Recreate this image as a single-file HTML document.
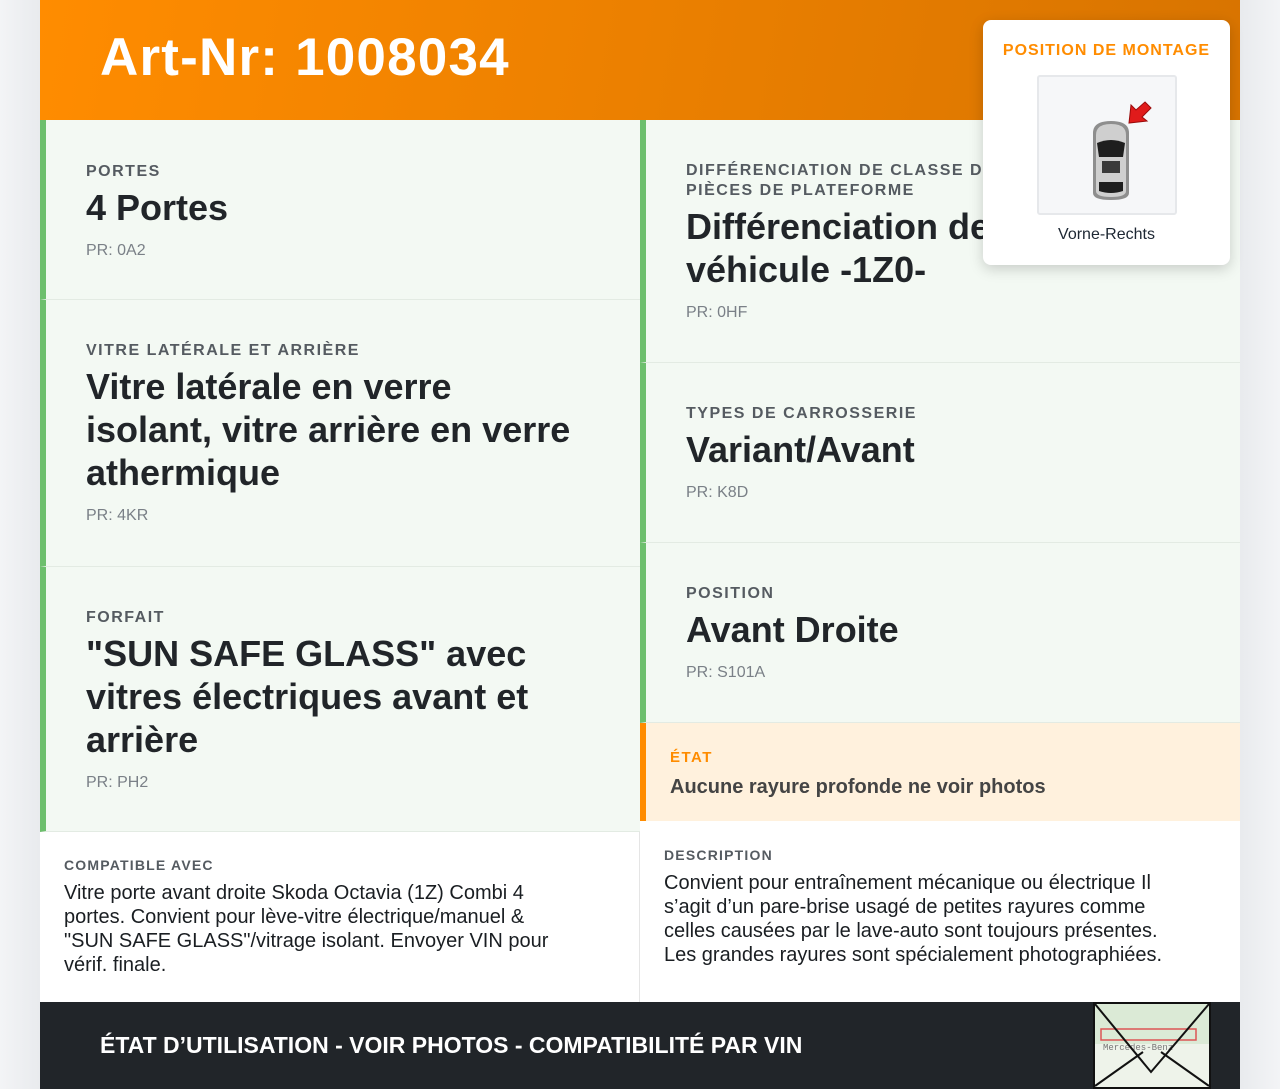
<!DOCTYPE html>
<html><head><meta charset="utf-8"><style>
*{box-sizing:border-box;margin:0;padding:0}
body{width:1280px;height:1089px;background:linear-gradient(90deg,#f3f4f6,#e9ebee 3%,#f3f4f6 50%,#e9ebee 97%,#f3f4f6);font-family:"Liberation Sans",sans-serif;color:#212529;position:relative;overflow:hidden}
.wrap{position:absolute;left:40px;top:0;width:1200px;height:1089px;background:#fff}
.hdr{position:absolute;left:0;top:0;width:1200px;height:120px;background:linear-gradient(100deg,#ff8c00,#d87400);}
.hdr h1{position:absolute;left:60px;top:27px;font-size:53px;color:#fff;font-weight:bold;letter-spacing:1.2px}
.cell{position:absolute;background:#f3f9f3;border-left:6px solid #6dbf6d;border-bottom:1px solid #e3ebe3;padding-left:40px}
.lab{font-size:16px;letter-spacing:1.5px;color:#555b61;font-weight:bold;text-transform:uppercase;line-height:20px}
.val{font-size:36px;font-weight:bold;line-height:43px;color:#212529;margin-top:4px;max-width:505px}
.pr{font-size:16px;color:#7a8087;margin-top:13px}
.bot{position:absolute;background:#fff;padding:22px 24px}
.bot .l{font-size:14px;letter-spacing:1.2px;color:#555b61;font-weight:bold}
.bot .t{font-size:20px;line-height:24px;margin-top:8px;color:#1a1e22}
.foot{position:absolute;left:0;top:1002px;width:1200px;height:87px;background:#212529}
.foot span{position:absolute;left:60px;top:30px;color:#fff;font-size:23px;font-weight:bold}
.pop{position:absolute;left:983px;top:20px;width:247px;height:245px;background:#fff;border-radius:8px;box-shadow:0 4px 14px rgba(0,0,0,.18);text-align:center}
</style></head><body>
<div class="wrap">
<div class="hdr"><h1>Art-Nr: 1008034</h1></div>
<div class="cell" style="left:0;top:120px;width:600px;height:180px;padding-top:42px"><div class="lab">Portes</div><div class="val">4 Portes</div><div class="pr">PR: 0A2</div></div>
<div class="cell" style="left:0;top:300px;width:600px;height:267px;padding-top:41px"><div class="lab">Vitre latérale et arrière</div><div class="val">Vitre latérale en verre<br>isolant, vitre arrière en verre athermique</div><div class="pr">PR: 4KR</div></div>
<div class="cell" style="left:0;top:567px;width:600px;height:265px;padding-top:41px"><div class="lab">Forfait</div><div class="val">"SUN SAFE GLASS" avec vitres électriques avant et arrière</div><div class="pr">PR: PH2</div></div>
<div class="cell" style="left:600px;top:120px;width:600px;height:243px;padding-top:41px;overflow:hidden"><div class="lab" style="white-space:nowrap">Différenciation de classe de véhicule</div><div class="lab">Pièces de plateforme</div><div class="val" style="white-space:nowrap;line-height:43px;max-width:none">Différenciation de classe de<br>véhicule -1Z0-</div><div class="pr">PR: 0HF</div></div>
<div class="cell" style="left:600px;top:363px;width:600px;height:180px;padding-top:41px"><div class="lab">Types de carrosserie</div><div class="val">Variant/Avant</div><div class="pr">PR: K8D</div></div>
<div class="cell" style="left:600px;top:543px;width:600px;height:180px;padding-top:41px"><div class="lab">Position</div><div class="val">Avant Droite</div><div class="pr">PR: S101A</div></div>
<div class="cell" style="left:600px;top:723px;width:600px;height:98px;background:#fff1dd;border-left-color:#ff8c00;padding:25px 0 0 24px;border-bottom:none"><div class="lab" style="color:#ff8c00;font-size:15px">État</div><div style="font-size:20px;color:#444;margin-top:8px;font-weight:bold">Aucune rayure profonde ne voir photos</div></div>
<div class="bot" style="left:0;top:832px;width:600px;height:170px;border-right:1px solid #e5e5e5"><div class="l" style="margin-top:3px">COMPATIBLE AVEC</div><div class="t" style="max-width:505px">Vitre porte avant droite Skoda Octavia (1Z) Combi 4 portes. Convient pour lève-vitre électrique/manuel &amp; "SUN SAFE GLASS"/vitrage isolant. Envoyer VIN pour vérif. finale.</div></div>
<div class="bot" style="left:600px;top:821px;width:600px;height:181px"><div class="l" style="margin-top:4px">DESCRIPTION</div><div class="t">Convient pour entraînement mécanique ou électrique Il<br>s’agit d’un pare-brise usagé de petites rayures comme<br>celles causées par le lave-auto sont toujours présentes.<br>Les grandes rayures sont spécialement photographiées.</div></div>
<div class="foot"><span>ÉTAT D’UTILISATION - VOIR PHOTOS - COMPATIBILITÉ PAR VIN</span>
<svg style="position:absolute;left:1053px;top:0" width="118" height="87" viewBox="0 0 118 87"><rect x="1" y="1" width="116" height="85" fill="#eef3ea"/><rect x="2" y="2" width="114" height="40" fill="#dbead6"/><rect x="8" y="27" width="95" height="11" fill="none" stroke="#d55" stroke-width="1.5"/><text x="10" y="48" font-size="9" font-family="Liberation Mono" fill="#777">Mercedes-Benz</text><path d="M2 2 L58 70 L116 2 M2 84 L50 50 M116 84 L68 50" stroke="#111" stroke-width="2" fill="none"/><rect x="1" y="1" width="116" height="85" fill="none" stroke="#111" stroke-width="2"/></svg></div>
</div>
<div class="pop">
<div style="font-size:16px;font-weight:bold;color:#ff8c00;letter-spacing:1px;margin-top:22px">POSITION DE MONTAGE</div>
<div style="position:absolute;left:54px;top:55px;width:140px;height:140px;background:#f6f7f9;border:2px solid #e6e8eb;border-radius:3px">
<svg width="136" height="136" viewBox="0 0 136 136">
<path d="M54 56 Q54 44 72 44 Q90 44 90 56 L90 116 Q90 123 72 123 Q54 123 54 116 Z" fill="#8e8e8e"/>
<path d="M57 58 Q57 47 72 47 Q87 47 87 58 L87 114 Q87 120 72 120 Q57 120 57 114 Z" fill="#cfcfcf"/>
<path d="M58 66 Q72 60 86 66 L84 80 L60 80 Z" fill="#1e1e1e"/>
<rect x="63" y="84" width="18" height="12" fill="#3a3a3a"/>
<path d="M60 105 L84 105 L84 114 Q72 118 60 114 Z" fill="#1e1e1e"/>
<path d="M106 25 L112 31 L103 40 L108 44 L90 46 L92 28 L97 33 Z" fill="#e01b1b" stroke="#9a0b0b" stroke-width="1"/>
</svg></div>
<div style="position:absolute;left:0;width:247px;top:206px;font-size:16px;color:#1d2733">Vorne-Rechts</div>
</div>
</body></html>
